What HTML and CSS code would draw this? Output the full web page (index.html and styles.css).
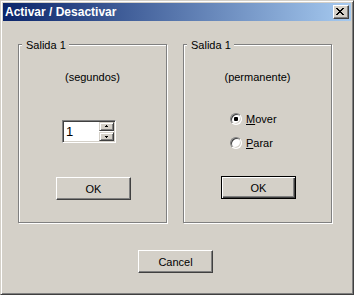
FILE: index.html
```html
<!DOCTYPE html>
<html lang="es">
<head>
    <meta charset="UTF-8">
    <meta name="viewport" content="width=device-width, initial-scale=1.0">
    <title>Activar / Desactivar</title>
    <link rel="stylesheet" href="styles.css">
</head>
<body>
    <div class="window">
        <div class="titlebar">
            <span class="title">Activar / Desactivar</span>
            <span class="close-btn">
                <svg width="8" height="7" viewBox="0 0 8 7">
                    <rect x="0" y="0" width="2" height="1"/>
                    <rect x="6" y="0" width="2" height="1"/>
                    <rect x="1" y="1" width="2" height="1"/>
                    <rect x="5" y="1" width="2" height="1"/>
                    <rect x="2" y="2" width="4" height="1"/>
                    <rect x="3" y="3" width="2" height="1"/>
                    <rect x="2" y="4" width="4" height="1"/>
                    <rect x="1" y="5" width="2" height="1"/>
                    <rect x="5" y="5" width="2" height="1"/>
                    <rect x="0" y="6" width="2" height="1"/>
                    <rect x="6" y="6" width="2" height="1"/>
                </svg>
            </span>
        </div>

        <div class="client">
            <div class="groups">
                <div class="group">
                    <span class="legend">Salida 1</span>
                    <p class="caption">(segundos)</p>
                    <div class="spinner">
                        <span class="spin-value">1</span>
                        <div class="spin-buttons">
                            <span class="spin-btn">
                                <svg width="5" height="3" viewBox="0 0 5 3"><rect x="2" y="0" width="1" height="1"/><rect x="1" y="1" width="3" height="1"/></svg>
                            </span>
                            <span class="spin-btn">
                                <svg width="5" height="3" viewBox="0 0 5 3"><rect x="1" y="1" width="3" height="1"/><rect x="2" y="2" width="1" height="1"/></svg>
                            </span>
                        </div>
                    </div>
                    <button class="btn ok-btn">OK</button>
                </div>

                <div class="group">
                    <span class="legend">Salida 1</span>
                    <p class="caption">(permanente)</p>
                    <div class="radios">
                        <label class="radio"><span class="radio-circle checked"></span><span><u>M</u>over</span></label>
                        <label class="radio"><span class="radio-circle"></span><span><u>P</u>arar</span></label>
                    </div>
                    <button class="btn btn-default ok-btn">OK</button>
                </div>
            </div>

            <button class="btn cancel-btn">Cancel</button>
        </div>
    </div>
</body>
</html>
```

FILE: styles.css
```css
:root {
    --face: #d4d0c8;
    --shadow: #808080;
    --dark: #404040;
    --light: #fff;
    --ui-font: "Liberation Sans", sans-serif;
}

body {
    margin: 0;
    background-color: var(--face);
    font-family: var(--ui-font);
    font-size: 11px;
    color: #000;
}

.window {
    width: 354px;
    height: 295px;
    box-sizing: border-box;
    border: 1px solid;
    border-color: var(--face) var(--dark) var(--dark) var(--face);
    box-shadow: inset 1px 1px 0 var(--light), inset -1px -1px 0 var(--shadow);
    padding: 2px;
    background-color: var(--face);
}

.titlebar {
    height: 18px;
    display: flex;
    align-items: center;
    justify-content: space-between;
    padding: 0 2px;
    background: linear-gradient(to right, #0a246a, #a6caf0);
}

.title {
    font-weight: bold;
    font-size: 12px;
    color: #fff;
}

.close-btn {
    display: block;
    width: 16px;
    height: 14px;
    box-sizing: border-box;
    padding: 2px 0 0 2px;
    border: 1px solid;
    border-color: var(--light) var(--dark) var(--dark) var(--light);
    box-shadow: inset -1px -1px 0 var(--shadow);
    background-color: var(--face);
}

.close-btn svg {
    display: block;
}

.client {
    display: flex;
    flex-direction: column;
    padding: 23px 0 0 15px;
}

.groups {
    display: flex;
    gap: 16px;
}

.group {
    position: relative;
    width: 149px;
    height: 179px;
    box-sizing: border-box;
    border: 1px solid var(--shadow);
    box-shadow: inset 1px 1px 0 var(--light), 1px 1px 0 var(--light);
    display: flex;
    flex-direction: column;
}

/* label sits on top of the etched line */
.legend {
    position: absolute;
    top: -7px;
    left: 3px;
    padding: 0 3px 0 4px;
    line-height: 14px;
    background-color: var(--face);
}

.caption {
    margin: 25px 0 0;
    line-height: 14px;
    text-align: center;
}

.spinner {
    align-self: flex-start;
    margin: 36px 0 0 43px;
    width: 54px;
    height: 23px;
    box-sizing: border-box;
    padding: 1px;
    border: 1px solid;
    border-color: var(--shadow) var(--light) var(--light) var(--shadow);
    box-shadow: inset 1px 1px 0 var(--dark), inset -1px -1px 0 var(--face);
    background-color: #fff;
    display: flex;
}

.spin-value {
    flex: 1;
    padding-left: 2px;
    line-height: 19px;
    font-size: 13px;
    color: #000;
}

.spin-buttons {
    width: 15px;
    display: flex;
    flex-direction: column;
    gap: 1px;
}

.spin-btn {
    height: 9px;
    box-sizing: border-box;
    border: 1px solid;
    border-color: var(--face) var(--dark) var(--dark) var(--face);
    box-shadow: inset 1px 1px 0 var(--light), inset -1px -1px 0 var(--shadow);
    background-color: var(--face);
    display: flex;
    align-items: center;
    justify-content: center;
}

.spin-btn svg {
    display: block;
}

.btn {
    width: 75px;
    height: 23px;
    box-sizing: border-box;
    padding: 0;
    border: 1px solid;
    border-color: var(--light) var(--dark) var(--dark) var(--light);
    box-shadow: inset -1px -1px 0 var(--shadow);
    background-color: var(--face);
    font-family: var(--ui-font);
    font-size: 11px;
    color: #000;
}

.btn-default {
    border-color: #000;
    box-shadow: inset 1px 1px 0 var(--light), inset -1px -1px 0 var(--dark), inset -2px -2px 0 var(--shadow);
}

.ok-btn {
    align-self: flex-start;
    margin: 34px 0 0 37px;
}

.radios + .ok-btn {
    margin-top: 25px;
}

.radios {
    align-self: flex-start;
    margin: 27px 0 0 46px;
    display: flex;
    flex-direction: column;
    gap: 8px;
}

.radio {
    display: flex;
    align-items: center;
    gap: 4px;
    height: 16px;
    line-height: 16px;
}

.radio-circle {
    position: relative;
    width: 12px;
    height: 12px;
    box-sizing: border-box;
    border-radius: 50%;
    border: 1px solid;
    border-color: var(--shadow) var(--light) var(--light) var(--shadow);
    box-shadow: inset 1px 1px 0 var(--dark), inset -1px -1px 0 var(--face);
    background-color: #fff;
}

.radio-circle.checked::after {
    content: '';
    position: absolute;
    top: 3px;
    left: 3px;
    width: 4px;
    height: 4px;
    border-radius: 1px;
    background-color: #000;
}

.cancel-btn {
    align-self: flex-start;
    margin: 27px 0 0 120px;
}
```
